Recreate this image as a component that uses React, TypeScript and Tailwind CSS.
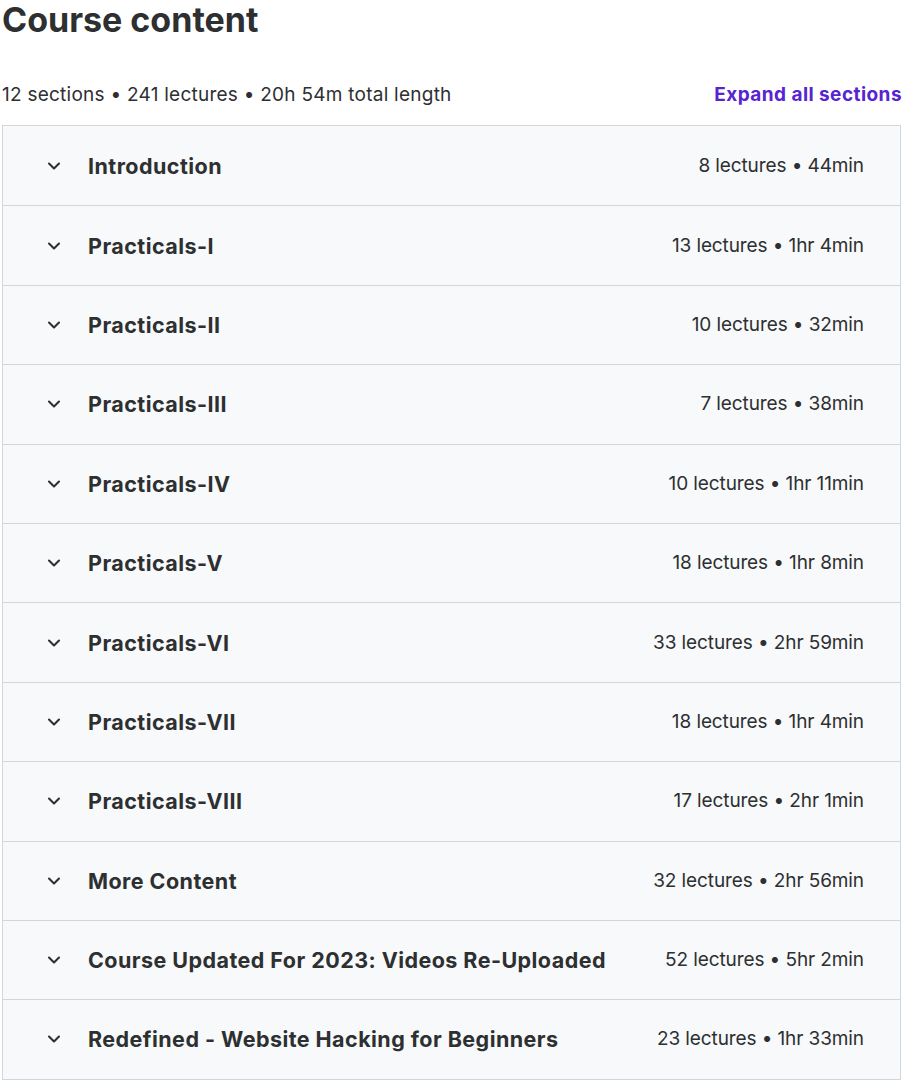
import { ChevronDown } from "lucide-react";

type Section = { title: string; meta: string };

const SECTIONS: Section[] = [
  { title: "Introduction", meta: "8 lectures • 44min" },
  { title: "Practicals-I", meta: "13 lectures • 1hr 4min" },
  { title: "Practicals-II", meta: "10 lectures • 32min" },
  { title: "Practicals-III", meta: "7 lectures • 38min" },
  { title: "Practicals-IV", meta: "10 lectures • 1hr 11min" },
  { title: "Practicals-V", meta: "18 lectures • 1hr 8min" },
  { title: "Practicals-VI", meta: "33 lectures • 2hr 59min" },
  { title: "Practicals-VII", meta: "18 lectures • 1hr 4min" },
  { title: "Practicals-VIII", meta: "17 lectures • 2hr 1min" },
  { title: "More Content", meta: "32 lectures • 2hr 56min" },
  { title: "Course Updated For 2023: Videos Re-Uploaded", meta: "52 lectures • 5hr 2min" },
  { title: "Redefined - Website Hacking for Beginners", meta: "23 lectures • 1hr 33min" },
];

export default function App() {
  return (
    <div className="w-[904px] h-[1084px] bg-white text-[#2d2f31] font-['Inter',sans-serif] overflow-hidden">
      <div className="px-[2px]">
        <h2 className="text-[34px] leading-[40px] font-bold text-[#2d2f31]">Course content</h2>
        <div className="flex items-end justify-between mt-[42px] mb-[17px]">
          <span className="text-[19px] leading-[26px] tracking-[0.25px]">
            12 sections • 241 lectures • 20h 54m total length
          </span>
          <button className="text-[19px] leading-[26px] font-bold tracking-[0.45px] text-[#5624d0]">
            Expand all sections
          </button>
        </div>
        <div className="border border-[#d1d7dc] mr-[1px]">
          {SECTIONS.map((s, i) => (
            <div
              key={s.title}
              className={
                "h-[79.4px] flex items-center bg-[#f7f9fa] pl-[41px] pr-[36px] " +
                (i > 0 ? "border-t border-[#d1d7dc]" : "")
              }
            >
              <ChevronDown className="w-[20px] h-[20px] shrink-0" strokeWidth={2.5} />
              <span className="ml-[24px] text-[21.5px] leading-[28px] font-bold tracking-[0.45px] flex-1">
                {s.title}
              </span>
              <span className="text-[19px] leading-[24px] tracking-[-0.1px] whitespace-nowrap">
                {s.meta}
              </span>
            </div>
          ))}
        </div>
      </div>
    </div>
  );
}
